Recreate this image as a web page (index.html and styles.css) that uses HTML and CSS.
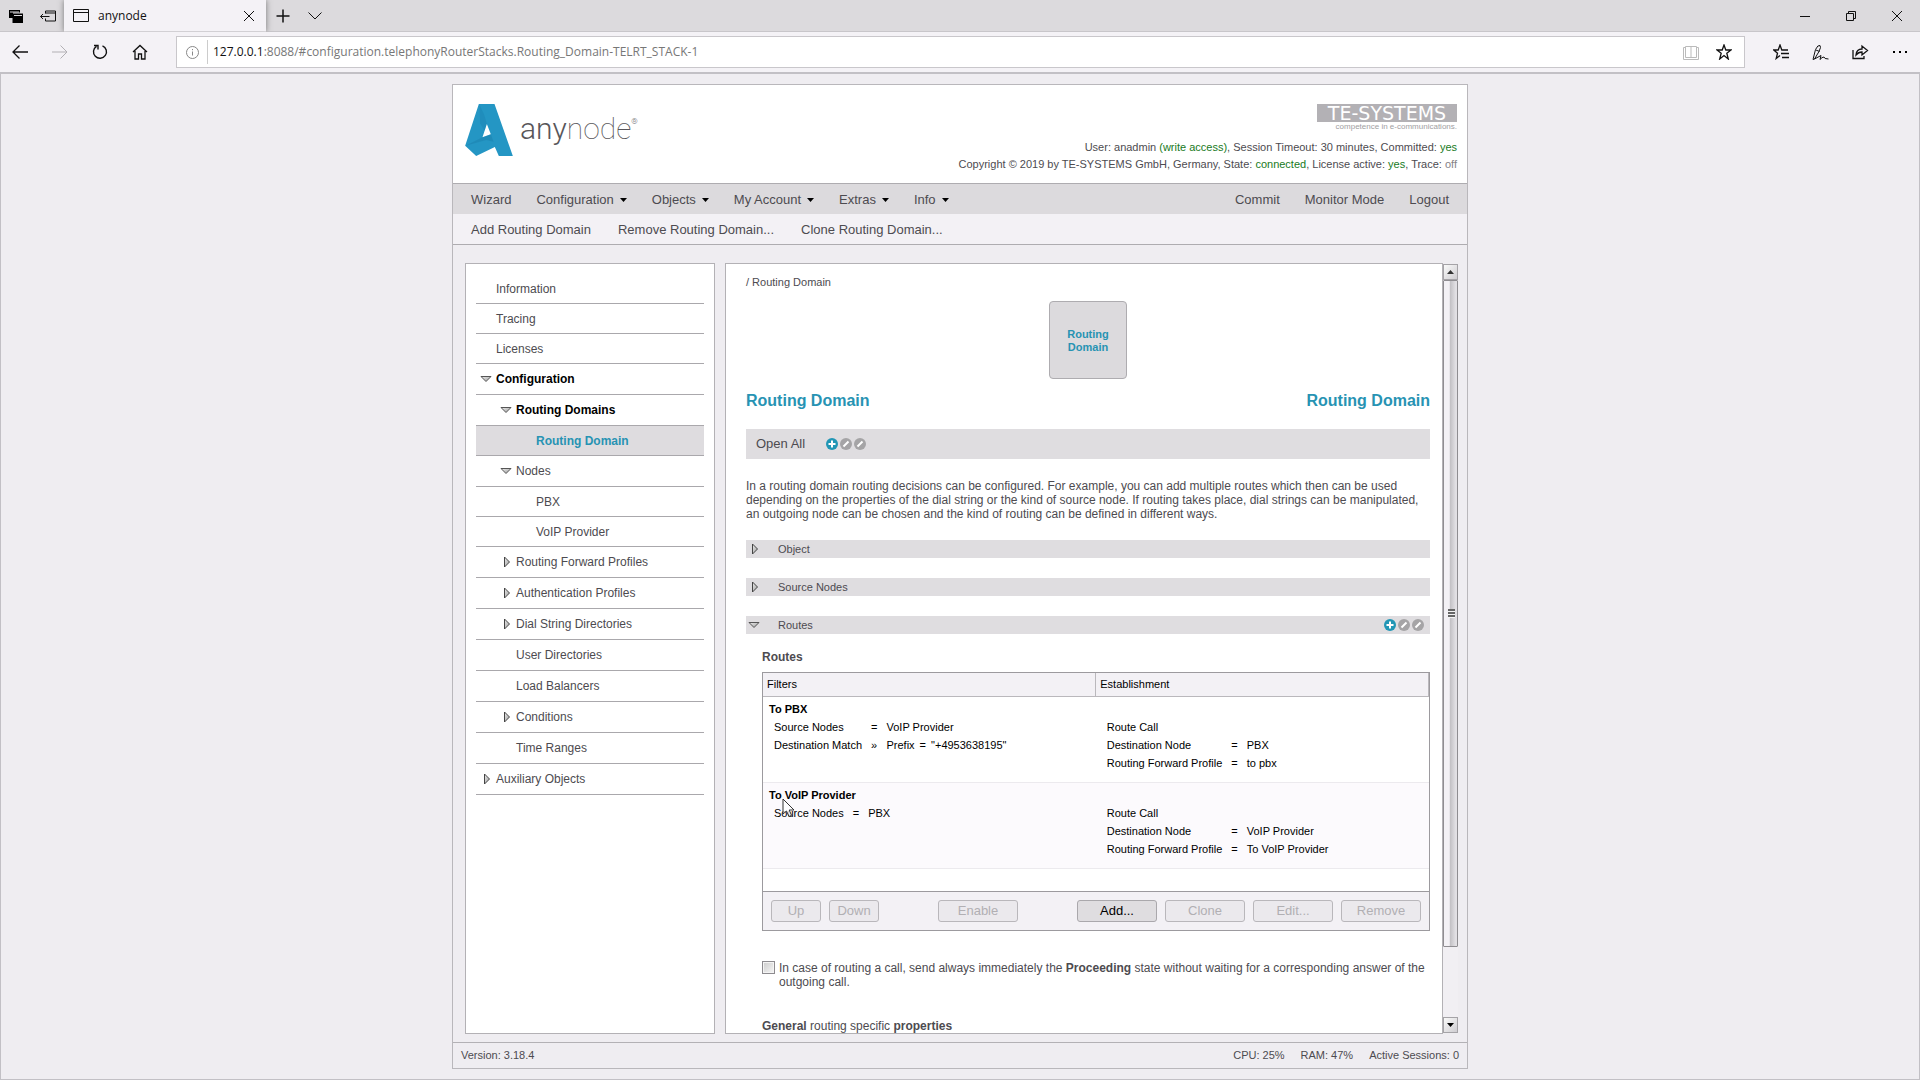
FILE: index.html
```html
<!DOCTYPE html>
<html lang="en">
<head>
<meta charset="utf-8">
<title>anynode</title>
<link rel="stylesheet" href="styles.css">
</head>
<body>
<svg class="defs" aria-hidden="true">
  <defs>
    <linearGradient id="arrow-fill" x1="0" y1="0" x2="1" y2="1"><stop offset="0" stop-color="#eee"/><stop offset="1" stop-color="#999"/></linearGradient>
    <symbol id="open" viewBox="0 0 12 12"><path d="M1 3.5h10L6 8.5z" fill="url(#arrow-fill)" stroke="#555"/></symbol>
    <symbol id="closed" viewBox="0 0 12 12"><path d="M4.500 1v10L9.500 6z" fill="url(#arrow-fill)" stroke="#444"/></symbol>
    <symbol id="plus" viewBox="0 0 12 12"><circle cx="6" cy="6" r="6" fill="#2196b5"/><path d="M6 2.500v7M2.500 6h7" stroke="#fff" stroke-width="2"/></symbol>
    <symbol id="pen" viewBox="0 0 12 12"><circle cx="6" cy="6" r="6" fill="#a5a4a6"/><path d="M3.500 8.500l5-5" stroke="#fff" stroke-width="2"/></symbol>
    <symbol id="caret" viewBox="0 0 7 4"><path d="M0 0h7L3.500 4z"/></symbol>
  </defs>
</svg>

<div class="tabs">
  <button class="tool tool-tabs" aria-label="Tab list"><svg width="16" height="16" viewBox="0 0 16 16"><path d="M1 2h11v2.500H5V10H1z"/><path d="M4.500 6V5.500H15V15H4.500z"/><path d="M2 4h9M6 7.500h8" stroke="#dcdadd"/></svg></button>
  <button class="tool tool-aside" aria-label="Set tabs aside"><svg class="line" width="16" height="16" viewBox="0 0 16 16"><path d="M5.500 5.500V3h10v10h-10v-2.500M5.500 5H15M.5 8.500h9M3 6L.5 8.500 3 11"/></svg></button>
  <div class="tab">
    <svg class="line" width="17" height="14" viewBox="0 0 17 14"><path d="M.5.5h15v12H.5zM.5 3.500h15"/></svg>
    <span class="tab-title">anynode</span>
    <button class="tool" aria-label="Close tab"><svg class="line" width="12" height="12" viewBox="0 0 12 12"><path d="M1 1l10 10M11 1L1 11"/></svg></button>
  </div>
  <button class="tool tool-new" aria-label="New tab"><svg class="line" width="14" height="14" viewBox="0 0 14 14"><path d="M7 .5v13M.5 7h13" stroke-width="1.500"/></svg></button>
  <button class="tool tool-more" aria-label="Tab previews"><svg class="line" width="14" height="8" viewBox="0 0 14 8"><path d="M.5.5L7 7l6.500-6.500"/></svg></button>
  <div class="window-tools">
    <button class="tool" aria-label="Minimize"><svg class="line" width="12" height="12" viewBox="0 0 12 12"><path d="M1 6.500h10"/></svg></button>
    <button class="tool" aria-label="Restore"><svg class="line" width="12" height="12" viewBox="0 0 12 12"><path d="M1.500 3.500h7v7h-7zM3.500 3.500v-2h7v7h-2"/></svg></button>
    <button class="tool" aria-label="Close"><svg class="line" width="12" height="12" viewBox="0 0 12 12"><path d="M1 1l10 10M11 1L1 11"/></svg></button>
  </div>
</div>

<div class="toolbar">
  <div class="nav-tools">
    <button class="tool" aria-label="Back"><svg class="line" width="16" height="16" viewBox="0 0 16 16"><path d="M1 8h15M7.500 1.500L1 8l6.500 6.500" stroke-width="1.300"/></svg></button>
    <button class="tool faded" aria-label="Forward"><svg class="line" width="16" height="16" viewBox="0 0 16 16"><path d="M0 8h15M8.500 1.500L15 8l-6.500 6.500"/></svg></button>
    <button class="tool" aria-label="Refresh"><svg class="line" width="16" height="16" viewBox="0 0 16 16"><path d="M10.500 1.800a6.500 6.500 0 1 1-6 .5M2 1.500h4v4" stroke-width="1.400"/></svg></button>
    <button class="tool" aria-label="Home"><svg class="line" width="16" height="16" viewBox="0 0 16 16"><path d="M1 8l7-6.500L15 8M3 7v8h3.500v-5h3v5H13V7" stroke-width="1.300"/></svg></button>
  </div>
  <div class="address">
    <svg class="info" width="13" height="13" viewBox="0 0 13 13"><circle cx="6.500" cy="6.500" r="6"/><path d="M6.500 5.500v4M6.500 3v1.200"/></svg>
    <span class="url"><b>127.0.0.1</b>:8088/#configuration.telephonyRouterStacks.Routing_Domain-TELRT_STACK-1</span>
    <button class="tool book" aria-label="Reading view"><svg class="line" width="16" height="15" viewBox="0 0 16 15"><path d="M8 2v11M8 1.500H2.500v11H8h5.500v-11zM2.500 2.500h-2v12h15v-12h-2"/></svg></button>
    <button class="tool" aria-label="Add to favourites"><svg class="line" width="16" height="16" viewBox="0 0 16 16"><path d="M8 1l1.800 5H15l-4.200 3.200L12.300 15 8 11.500 3.700 15l1.500-5.800L1 6h5.200z" stroke-width="1.300"/></svg></button>
  </div>
  <div class="page-tools">
    <button class="tool" aria-label="Favourites"><svg class="line" width="16" height="16" viewBox="0 0 16 16"><path d="M15 6H8.800L7 1 5.200 6H.8l3.700 3.200L3.200 14.500 7 11.500M8 9.500h8M9 13.500h7" stroke-width="1.300"/></svg></button>
    <button class="tool" aria-label="Add notes"><svg class="line" width="17" height="17" viewBox="0 0 17 17"><path d="M1 15.500l2.500-10Q6 .5 8 1.500q1.500 1-1 6L2.500 15 1 15.500M4 6l3.500 1.500M2.500 15L9 11.500l-1 4q2-2.500 4-2.500 0 2 4.500 2"/></svg></button>
    <button class="tool" aria-label="Share"><svg class="line" width="17" height="16" viewBox="0 0 17 16"><path d="M1 6v8.500h11V12M4 11q.5-6 6-6V2l5.500 4.500L10 11V8q-3.500 0-6 3z" stroke-width="1.300"/></svg></button>
    <button class="tool" aria-label="More"><svg width="16" height="4" viewBox="0 0 16 4"><path d="M1 1h2v2H1zM7 1h2v2H7zM13 1h2v2h-2z"/></svg></button>
  </div>
</div>

<div class="viewport">
<div class="app">
  <header class="header">
    <a class="brand" href="#home">
      <svg width="48" height="52" viewBox="47 72 143 156" aria-hidden="true">
        <path d="M88 72h47l55 156h-42l-12-27-56 27-33-31zM112 132l-13 40 25-9z" fill="#2496c4" fill-rule="evenodd"/>
        <path d="M99 172l25-9 8 22-22-5-62 17z" fill="#187ba8" opacity=".4"/>
        <path d="M90 74l14 30 8 28-7 20-13-22z" fill="#187ba8" opacity=".3"/>
      </svg>
      <span class="brand-name">any<span class="thin">node</span><span class="reg">®</span></span>
    </a>
    <div class="status">
      <div class="te-logo">TE-SYSTEMS</div>
      <div class="te-claim">competence in e-communications.</div>
      <p>User: anadmin <span class="good">(write access)</span>, Session Timeout: 30 minutes, Committed: <span class="good">yes</span></p>
      <p>Copyright © 2019 by TE-SYSTEMS GmbH, Germany, State: <span class="good">connected</span>, License active: <span class="good">yes</span>, Trace: <span class="off">off</span></p>
    </div>
  </header>

  <nav class="menu">
    <a href="#wizard">Wizard</a>
    <a href="#configuration">Configuration <svg width="7" height="4"><use href="#caret"/></svg></a>
    <a href="#objects">Objects <svg width="7" height="4"><use href="#caret"/></svg></a>
    <a href="#account">My Account <svg width="7" height="4"><use href="#caret"/></svg></a>
    <a href="#extras">Extras <svg width="7" height="4"><use href="#caret"/></svg></a>
    <a href="#info">Info <svg width="7" height="4"><use href="#caret"/></svg></a>
    <a class="push" href="#commit">Commit</a>
    <a href="#monitor">Monitor Mode</a>
    <a href="#logout">Logout</a>
  </nav>
  <nav class="menu submenu">
    <a href="#add">Add Routing Domain</a>
    <a href="#remove">Remove Routing Domain...</a>
    <a href="#clone">Clone Routing Domain...</a>
  </nav>

  <div class="main">
    <nav class="sidebar">
      <ul>
        <li><a href="#i">Information</a></li>
        <li><a href="#t">Tracing</a></li>
        <li><a href="#l">Licenses</a></li>
        <li class="tall strong"><svg><use href="#open"/></svg><a href="#c">Configuration</a></li>
        <li class="tall level2 strong"><svg><use href="#open"/></svg><a href="#rds">Routing Domains</a></li>
        <li class="level3 selected"><a href="#rd">Routing Domain</a></li>
        <li class="tall level2"><svg><use href="#open"/></svg><a href="#n">Nodes</a></li>
        <li class="level3"><a href="#pbx">PBX</a></li>
        <li class="level3"><a href="#voip">VoIP Provider</a></li>
        <li class="tall level2"><svg><use href="#closed"/></svg><a href="#rfp">Routing Forward Profiles</a></li>
        <li class="tall level2"><svg><use href="#closed"/></svg><a href="#ap">Authentication Profiles</a></li>
        <li class="tall level2"><svg><use href="#closed"/></svg><a href="#dsd">Dial String Directories</a></li>
        <li class="tall level2"><a href="#ud">User Directories</a></li>
        <li class="tall level2"><a href="#lb">Load Balancers</a></li>
        <li class="tall level2"><svg><use href="#closed"/></svg><a href="#cond">Conditions</a></li>
        <li class="tall level2"><a href="#tr">Time Ranges</a></li>
        <li class="tall"><svg><use href="#closed"/></svg><a href="#ao">Auxiliary Objects</a></li>
      </ul>
    </nav>

    <main class="content">
      <div class="crumb">/ Routing Domain</div>
      <a class="node" href="#node">Routing Domain</a>
      <div class="titles"><h1>Routing Domain</h1><h1>Routing Domain</h1></div>
      <div class="open-all">
        <button>Open All</button>
        <span class="marks"><svg><use href="#plus"/></svg><svg><use href="#pen"/></svg><svg><use href="#pen"/></svg></span>
      </div>
      <p class="intro">In a routing domain routing decisions can be configured. For example, you can add multiple routes which then can be used depending on the properties of the dial string or the kind of source node. If routing takes place, dial strings can be manipulated, an outgoing node can be chosen and the kind of routing can be defined in different ways.</p>

      <button class="section"><svg><use href="#closed"/></svg>Object</button>
      <button class="section"><svg><use href="#closed"/></svg>Source Nodes</button>
      <button class="section"><svg><use href="#open"/></svg>Routes
        <span class="marks"><svg><use href="#plus"/></svg><svg><use href="#pen"/></svg><svg><use href="#pen"/></svg></span></button>

      <div class="routes">
        <h2>Routes</h2>
        <div class="grid">
          <table>
            <thead><tr><th>Filters</th><th>Establishment</th></tr></thead>
            <tbody>
              <tr>
                <td><strong>To PBX</strong>
                  <div class="rules"><span>Source Nodes</span><span>=</span><span>VoIP Provider</span><span>Destination Match</span><span>»</span><span class="parts"><span>Prefix</span><span>=</span><span>"+4953638195"</span></span></div></td>
                <td><div class="rules"><span>Route Call</span><span></span><span></span><span>Destination Node</span><span>=</span><span>PBX</span><span>Routing Forward Profile</span><span>=</span><span>to pbx</span></div></td>
              </tr>
              <tr>
                <td><strong>To VoIP Provider</strong>
                  <svg class="pointer" width="14" height="20" viewBox="0 0 14 20"><path d="M1 1v15l3.500-3 2.500 5.500 2.500-1.200L7.200 12H12z" fill="#fff" fill-opacity=".75" stroke="#333"/></svg>
                  <div class="rules"><span>Source Nodes</span><span>=</span><span>PBX</span></div></td>
                <td><div class="rules"><span>Route Call</span><span></span><span></span><span>Destination Node</span><span>=</span><span>VoIP Provider</span><span>Routing Forward Profile</span><span>=</span><span>To VoIP Provider</span></div></td>
              </tr>
            </tbody>
          </table>
          <div class="actions">
            <div class="pair"><button disabled class="short">Up</button><button disabled class="short">Down</button></div>
            <button disabled>Enable</button>
            <div class="pair"><button>Add...</button><button disabled>Clone</button><button disabled>Edit...</button><button disabled>Remove</button></div>
          </div>
        </div>
        <label class="option"><input type="checkbox"><span>In case of routing a call, send always immediately the <b>Proceeding</b> state without waiting for a corresponding answer of the outgoing call.</span></label>
        <p class="general"><b>General</b> routing specific <b>properties</b></p>
      </div>
    </main>

    <div class="scrollbar">
      <button aria-label="Scroll up"><svg width="7" height="4" viewBox="0 0 7 4"><path d="M0 4h7L3.500 0z" fill="#333"/></svg></button>
      <div class="thumb"><span class="grip"></span></div>
      <div class="track"></div>
      <button aria-label="Scroll down"><svg width="7" height="4"><use href="#caret"/></svg></button>
    </div>
  </div>

  <footer class="footer">
    <span>Version: 3.18.4</span>
    <span class="push">CPU: 25%</span><span>RAM: 47%</span><span>Active Sessions: 0</span>
  </footer>
</div>
</div>
</body>
</html>
```
FILE: styles.css
```css
* { box-sizing: border-box; }

body {
  margin: 0;
  height: 100vh;
  display: flex;
  flex-direction: column;
  background: #efedf1;
  color: #4d4b50;
  font: 12px/14px "Liberation Sans", Arial, sans-serif;
}

h1, h2, p, ul { margin: 0; padding: 0; }
a { color: inherit; text-decoration: none; }
button { font: inherit; color: inherit; border: 0; padding: 0; background: none; }
.defs { position: absolute; width: 0; height: 0; }
.line { fill: none; stroke: currentColor; }
.push { margin-left: auto; }

/* Browser frame */
.tool { display: flex; align-items: center; justify-content: center; color: #111; }
.tabs {
  display: flex;
  align-items: center;
  height: 32px;
  flex: none;
  background: #dcdadd;
  border-bottom: 1px solid #c8c6ca;
  font-family: "Open Sans", sans-serif;
  color: #111;
}
.tool-tabs { margin-left: 8px; }
.tool-aside { margin: 0 8px 0 16px; }
.tab {
  display: flex;
  align-items: center;
  width: 202px;
  height: 32px;
  padding: 0 11px 0 9px;
  background: #f4f2f6;
  box-shadow: 0 0 6px #777;
  clip-path: inset(0 -8px 0 -8px);
}
.tab-title { flex: 1; padding-left: 8px; }
.tool-new { margin-left: 10px; }
.tool-more { margin-left: 18px; }
.window-tools { display: flex; gap: 34px; margin-left: auto; padding-right: 17px; }
.toolbar {
  display: flex;
  align-items: center;
  height: 40px;
  flex: none;
  background: #f4f2f6;
}
.nav-tools { display: flex; gap: 24px; width: 176px; padding-left: 12px; }
.nav-tools .faded { color: #b2b0b4; }
.address {
  display: flex;
  align-items: center;
  flex: 1;
  height: 32px;
  padding: 0 12px 0 9px;
  background: #fff;
  border: 1px solid #c9c7cb;
  font-family: "Open Sans", sans-serif;
  color: #777;
}
.info { fill: none; stroke: #888; }
.url { flex: 1; margin-left: 8px; padding-left: 5px; border-left: 1px solid #ccc; line-height: 24px; }
.url b { font-weight: 400; color: #111; }
.address .book { margin-right: 17px; color: #bbb; }
.page-tools { display: flex; gap: 23px; padding: 0 12px 0 28px; }

/* Page frame */
.viewport {
  flex: 1;
  min-height: 0;
  padding: 10px;
  border: 1px solid #c2c0c5;
  border-top-width: 2px;
}
.app {
  display: flex;
  flex-direction: column;
  max-width: 1016px;
  height: 100%;
  margin: 0 auto;
  border: 1px solid #b9b7bb;
}
.header {
  display: flex;
  justify-content: space-between;
  padding: 19px 10px 10px 12px;
  background: #fff;
  border-bottom: 1px solid #aeacb0;
}
.brand { display: flex; align-items: flex-start; gap: 7px; }
.brand-name { font: 300 30px/36px Roboto, sans-serif; color: #58565a; }
.thin { font-weight: 100; }
.reg { font-size: 8px; vertical-align: 15px; }
.status { display: flex; flex-direction: column; align-items: flex-end; font-size: 11px; line-height: 17px; }
.te-logo {
  width: 140px;
  height: 18px;
  background: #b3b1b5;
  color: #fff;
  font: 19px/18px "DejaVu Sans", sans-serif;
  text-align: center;
}
.te-claim { margin-bottom: 7px; font-size: 8px; line-height: 10px; color: #a09ea2; }
.good { color: #187a1c; }
.off { color: #858387; }

.menu {
  display: flex;
  align-items: center;
  gap: 25px;
  height: 30px;
  flex: none;
  padding: 2px 18px 0;
  background: #dcdadd;
  font-size: 13px;
}
.menu a { display: flex; align-items: center; gap: 6px; }
.menu svg { fill: #000; }
.submenu { gap: 27px; height: 31px; background: #f3f1f5; border-bottom: 1px solid #aeacb0; }

.main { display: flex; flex: 1; min-height: 0; padding: 18px 9px 8px 12px; }
.sidebar {
  flex: none;
  width: 250px;
  margin-right: 10px;
  padding: 10px;
  background: #fff;
  border: 1px solid #b3b1b5;
}
.sidebar ul { list-style: none; }
.sidebar li {
  display: flex;
  align-items: center;
  height: 30px;
  padding-left: 20px;
  border-bottom: 1px solid #aaa8ac;
}
.sidebar .tall { height: 31px; }
.sidebar .level2 { padding-left: 40px; }
.sidebar .level3 { padding-left: 60px; }
.sidebar svg { width: 12px; height: 12px; margin: 0 4px 0 -16px; }
.sidebar .strong { font-weight: 700; color: #000; }
.sidebar .selected { background: #dedcdf; color: #2793b3; font-weight: 700; }

/* Content */
.content {
  flex: 1;
  min-width: 0;
  padding: 11px 12px 0 20px;
  overflow: hidden;
  background: #fff;
  border: 1px solid #b3b1b5;
}
.crumb { font-size: 11px; }
.node {
  display: flex;
  align-items: center;
  width: 78px;
  height: 78px;
  margin: 12px auto;
  padding: 2px 10px 0;
  background: #dcdadd;
  border: 1px solid #aeacb0;
  border-radius: 4px;
  color: #2793b3;
  font-size: 11px;
  font-weight: 700;
  line-height: 13px;
  text-align: center;
}
.titles { display: flex; justify-content: space-between; color: #2793b3; }
h1 { font-size: 16px; line-height: 20px; }
.open-all {
  display: flex;
  align-items: center;
  gap: 21px;
  height: 30px;
  margin: 18px 0 20px;
  padding: 0 10px;
  background: #dfdde0;
  font-size: 13px;
}
.marks { display: flex; gap: 2px; }
.marks svg { width: 12px; height: 12px; }
.intro { margin-bottom: 19px; }
.section {
  display: flex;
  align-items: center;
  width: 100%;
  height: 18px;
  margin-bottom: 20px;
  padding: 0 6px 0 2px;
  background: #dfdde0;
  font-size: 11px;
}
.section > svg { width: 12px; height: 12px; margin-right: 18px; }
.section .marks { margin-left: auto; }
.routes { padding-left: 16px; }
h2 { margin: -4px 0 8px; font-size: 12px; line-height: 14px; }
.grid { border: 1px solid #9c9a9e; color: #000; }
table { width: 100%; border-collapse: collapse; table-layout: fixed; font-size: 11px; line-height: 18px; margin-bottom: 22px; }
th {
  height: 23px;
  padding: 0 4px;
  background: #f3f1f5;
  border: 1px solid #bab8bc;
  border-width: 0 1px 1px 0;
  font-weight: 400;
  text-align: left;
}
tbody tr { border-bottom: 1px solid #eceaee; }
tbody tr:nth-child(even) { background: #fcfafd; }
td { position: relative; padding: 3px 6px 10px; vertical-align: top; }
td + td { padding: 21px 6px 10px; }
td strong { display: block; }
.rules { display: grid; grid-template-columns: repeat(3, max-content); column-gap: 9px; grid-auto-rows: 18px; padding-left: 5px; }
.parts { display: flex; gap: 5px; }
.pointer { position: absolute; left: 19px; top: 15px; }
.actions {
  display: flex;
  justify-content: space-between;
  padding: 8px;
  background: #f3f1f5;
  border-top: 1px solid #9c9a9e;
}
.pair { display: flex; gap: 8px; }
.actions button {
  width: 80px;
  height: 22px;
  background: #dfdde0;
  border: 1px solid #aaa8ac;
  border-radius: 3px;
  font-size: 13px;
}
.actions .short { width: 50px; }
.actions button:disabled { background: #ebe9ed; color: #b1afb3; border-color: #b9b7bb; }
.option { display: flex; align-items: flex-start; gap: 4px; margin-top: 30px; }
.option input {
  appearance: none;
  flex: none;
  width: 13px;
  height: 13px;
  margin: 0;
  background: linear-gradient(135deg, #ccc, #f6f6f6);
  border: 1px solid #8d8b8f;
  box-shadow: inset 0 0 0 1px #f4f4f4;
}
.general { margin-top: 30px; }

.scrollbar { display: flex; flex-direction: column; width: 15px; flex: none; padding: 1px 0; }
.scrollbar button {
  display: flex;
  align-items: center;
  justify-content: center;
  height: 16px;
  flex: none;
  background: linear-gradient(135deg, #fafafa, #cfcdd1);
  border: 1px solid #a5a3a7;
}
.thumb {
  display: flex;
  align-items: center;
  justify-content: flex-end;
  flex: 19;
  padding-right: 2px;
  background: linear-gradient(90deg, #f3f1f5 40%, #c4c2c6 50%, #e2e0e4 90%);
  border: 1px solid #8f8d91;
  border-radius: 1px;
}
.grip { width: 7px; height: 9px; background: repeating-linear-gradient(#666 0 2px, #f4f4f4 2px 3px); }
.track { flex: 2; background: #f1eff3; }

.footer {
  display: flex;
  align-items: center;
  gap: 16px;
  height: 26px;
  flex: none;
  padding: 0 8px 2px;
  border-top: 1px solid #b3b1b5;
  font-size: 11px;
}
```
